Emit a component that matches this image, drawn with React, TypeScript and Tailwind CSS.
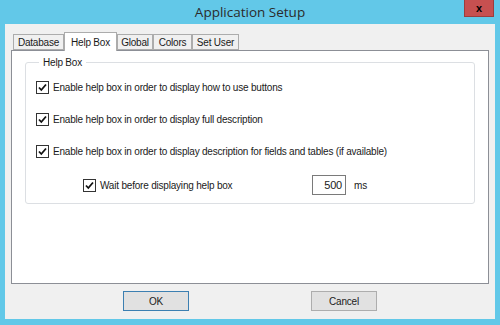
import React from "react";

const tabs = [
  { label: "Database", w: "w-[51px]" },
  { label: "Help Box", w: "w-[53px]" },
  { label: "Global", w: "w-[36px]" },
  { label: "Colors", w: "w-[39px]" },
  { label: "Set User", w: "w-[47px]" },
];

function Check({ checked = true }: { checked?: boolean }) {
  return (
    <span className="flex h-[13px] w-[13px] shrink-0 items-center justify-center border border-[#333333] bg-white">
      {checked && (
        <svg width="11" height="11" viewBox="0 0 11 11">
          <path d="M2 5.5 L4.3 8 L9 2.5" fill="none" stroke="#111" strokeWidth="1.8" />
        </svg>
      )}
    </span>
  );
}

function Option({ label, className = "" }: { label: string; className?: string }) {
  return (
    <label className={`flex h-[13px] items-center gap-[4px] leading-[13px] ${className}`}>
      <Check />
      <span>{label}</span>
    </label>
  );
}

export default function App() {
  return (
    <div
      className="flex h-[325px] w-[500px] flex-col bg-[#62c8e8] px-[5px] pb-[6px] text-[#1a1a1a]"
      style={{ fontFamily: "'Liberation Sans', Arial, sans-serif" }}
    >
      {/* title bar */}
      <div className="relative flex h-[24px] shrink-0 items-center justify-center">
        <span
          className="text-[13.5px] text-[#2b2b2b]"
          style={{ fontFamily: "'Open Sans', 'Noto Sans', sans-serif" }}
        >
          Application Setup
        </span>
        <button className="absolute right-[1px] top-0 flex h-[17px] w-[30px] items-center justify-center border border-t-0 border-[#9c3d3d] bg-[#c75050] text-[11px] font-bold text-black">
          x
        </button>
      </div>

      {/* client area */}
      <div className="flex flex-1 flex-col bg-[#f0f0f0] px-[6px] pt-[8px] text-[10px] tracking-[-0.2px]">
        <div className="flex items-end pl-[2px]">
          {tabs.map((t) =>
            t.label === "Help Box" ? (
              <div
                key={t.label}
                className={`relative z-10 -mb-px flex h-[19px] items-center justify-center border border-b-0 border-[#acacac] bg-white ${t.w}`}
              >
                {t.label}
              </div>
            ) : (
              <div
                key={t.label}
                className={`flex h-[16px] items-center justify-center border border-[#acacac] bg-[#f0f0f0] ${t.w}`}
              >
                {t.label}
              </div>
            )
          )}
        </div>

        <div className="h-[234px] border border-[#8c8f96] bg-white px-[13px] pt-[5px]">
          <fieldset className="h-[148px] rounded-[3px] border border-[#dcdfe3] px-[10px]">
            <legend className="ml-[3px] px-[4px] leading-[13px]">Help Box</legend>
            <div className="flex flex-col gap-[19px] pt-[12px]">
              <Option label="Enable help box in order to display how to use buttons" />
              <Option label="Enable help box in order to display full description" />
              <Option label="Enable help box in order to display description for fields and tables (if available)" />
            </div>
            <div className="mt-[17px] flex h-[20px] items-center pl-[47px]">
              <Option label="Wait before displaying help box" className="w-[229px]" />
              <div className="flex h-[20px] w-[34px] items-center justify-end border border-[#7a7a7a] bg-white pr-[3px] text-[11px]">
                500
              </div>
              <span className="ml-[8px]">ms</span>
            </div>
          </fieldset>
        </div>

        <div className="flex justify-between px-[112px] pt-[7px]">
          <button className="h-[20px] w-[66px] border border-[#3c7fb1] bg-[#e1e1e1] text-[10px]">
            OK
          </button>
          <button className="h-[20px] w-[66px] border border-[#adadad] bg-[#e1e1e1] text-[10px]">
            Cancel
          </button>
        </div>
      </div>
    </div>
  );
}
